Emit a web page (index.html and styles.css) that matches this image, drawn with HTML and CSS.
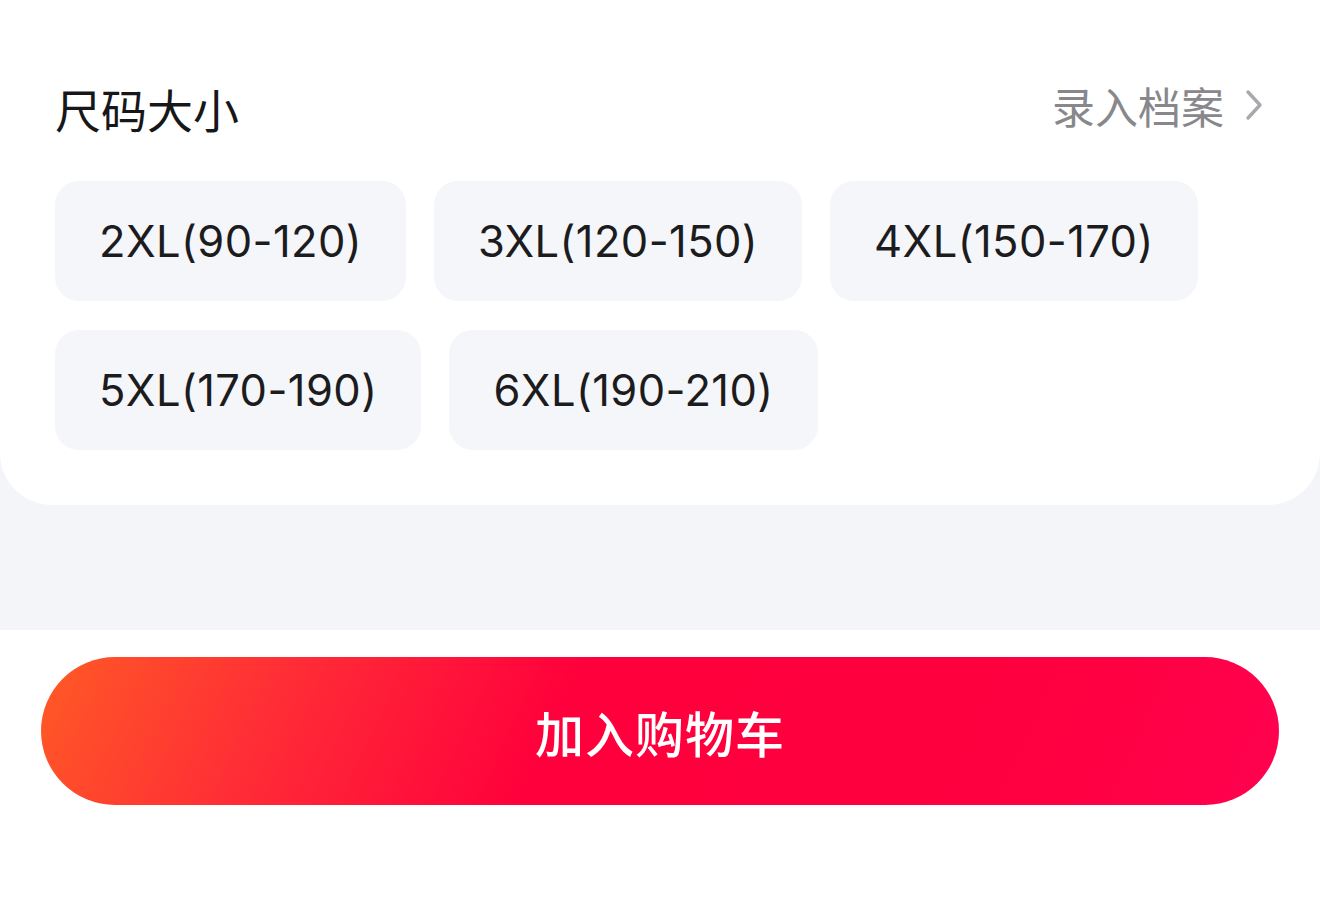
FILE: index.html
```html
<!DOCTYPE html>
<html>
<head>
  <meta charset="UTF-8">
  <title>尺码大小</title>
  <link rel="stylesheet" href="styles.css">
</head>
<body>
  <div class="sheet">
    <div class="sheet-head">
      <span class="sheet-title">尺码大小</span>
      <span class="sheet-link">录入档案
        <svg class="chevron" width="20" height="32" viewBox="0 0 20 32">
          <path d="M4 3 L16 16 L4 29" fill="none" stroke="#a9a9ad" stroke-width="3.4" stroke-linecap="round" stroke-linejoin="round"/>
        </svg>
      </span>
    </div>
    <div class="sizes">
      <div class="size">2XL(90-120)</div>
      <div class="size">3XL(120-150)</div>
      <div class="size">4XL(150-170)</div>
      <div class="size">5XL(170-190)</div>
      <div class="size">6XL(190-210)</div>
    </div>
  </div>
  <div class="spacer"></div>
  <div class="footer">
    <button class="cart-btn">加入购物车</button>
  </div>
</body>
</html>
```

FILE: styles.css
```css
body{
  margin:0;
  background-color:#f4f5f9;
  font-family:"Inter","Noto Sans CJK SC",sans-serif;
  color:#1c1c1e;
}
.sheet{
  background-color:#fff;
  border-radius:0 0 52px 52px;
  padding:78px 55px 54px 55px;
  height:505px;
  box-sizing:border-box;
}
.sheet-head{
  display:flex;
  justify-content:space-between;
  align-items:center;
  height:60px;
}
.sheet-title{
  font-size:46px;
  font-weight:400;
  color:#17171a;
}
.sheet-link{
  display:flex;
  align-items:center;
  gap:20px;
  font-size:43px;
  color:#88888c;
  margin-right:1px;
  margin-top:-6px;
}
.sizes{
  display:flex;
  flex-wrap:wrap;
  gap:29px 28px;
  margin-top:43px;
}
.size{
  height:120px;
  display:flex;
  align-items:center;
  padding:0 44px 0 44px;
  background-color:#f5f6f9;
  border-radius:24px;
  font-size:43.5px;
  letter-spacing:0.4px;
  color:#1c1c1e;
}
.spacer{
  height:125px;
}
.footer{
  background-color:#fff;
  height:291px;
  padding:27px 41px 0 41px;
  box-sizing:border-box;
}
.cart-btn{
  width:100%;
  height:148px;
  border:none;
  border-radius:74px;
  background:linear-gradient(115deg,#ff5a26 0%,#ff2c36 20%,#ff003c 42%,#ff0040 80%,#ff0250 100%);
  color:#fff;
  font-family:inherit;
  font-size:49px;
  font-weight:500;
  letter-spacing:1px;
}
```
